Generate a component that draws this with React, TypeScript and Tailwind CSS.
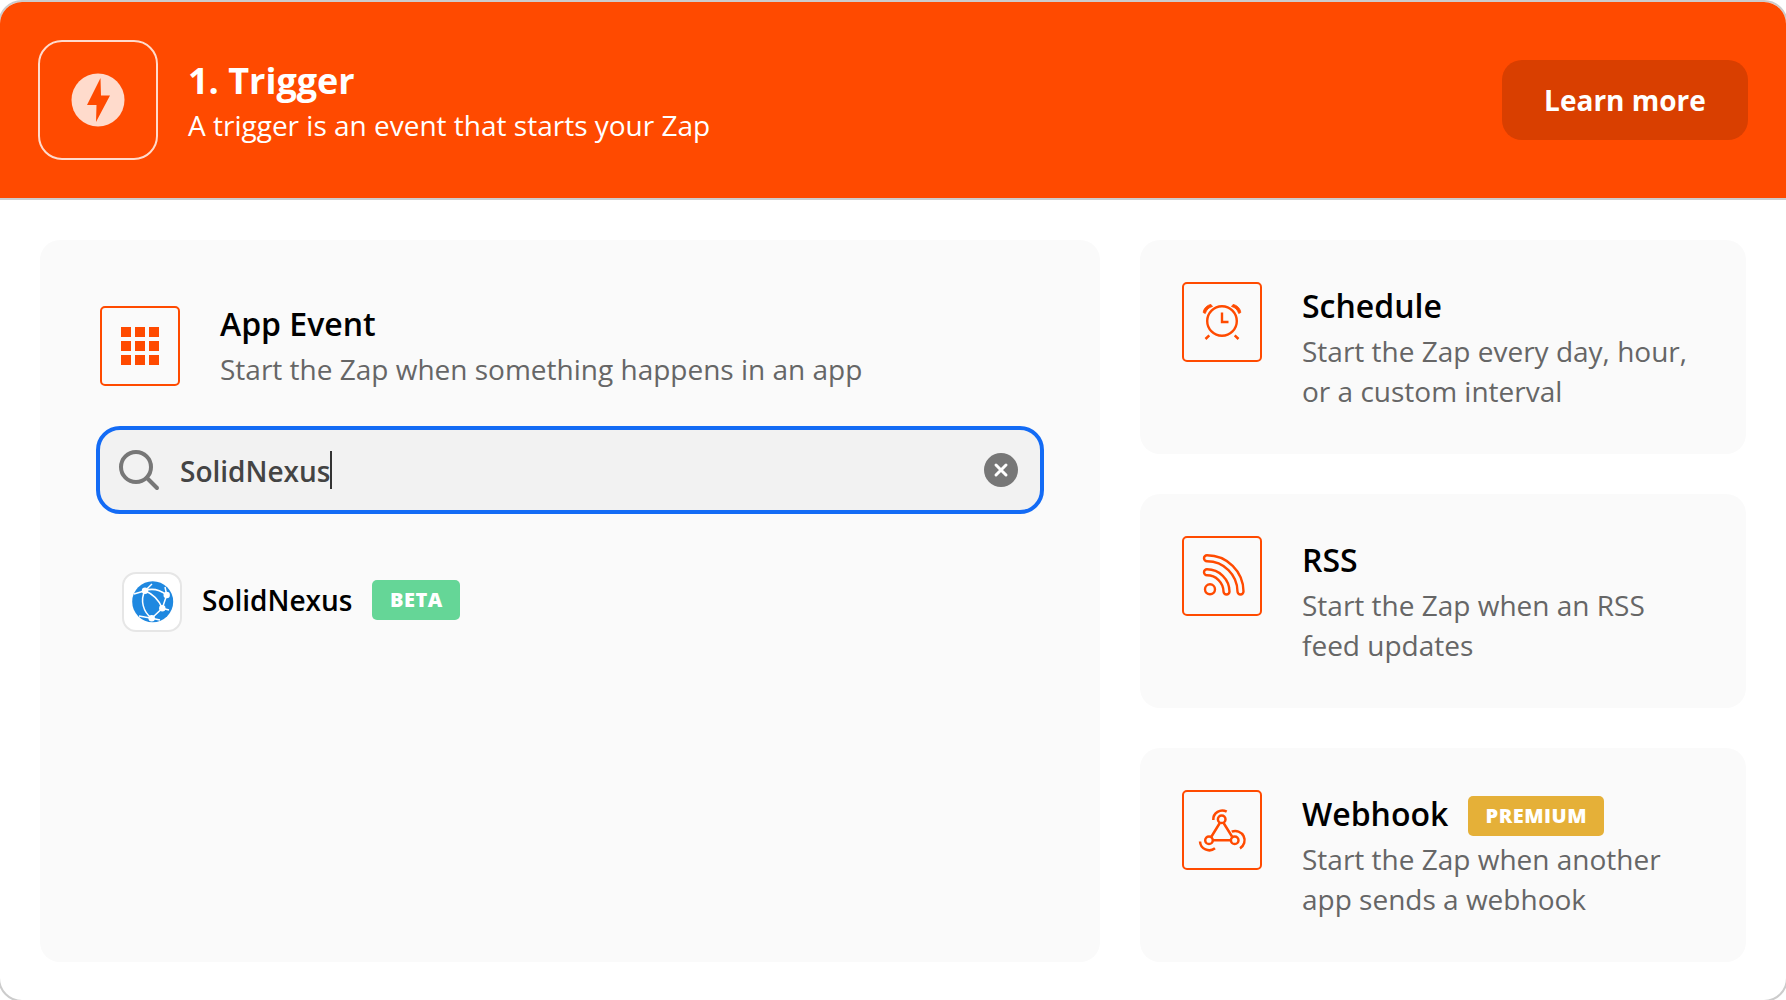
import React from "react";

const Box = ({ children }: { children: React.ReactNode }) => (
  <div className="w-20 h-20 shrink-0 rounded-[5px] border-2 border-[#ff4a00] flex items-center justify-center">
    <svg width="76" height="76" viewBox="2 2 76 76" fill="none" stroke="#ff4a00" strokeWidth="2.400">
      {children}
    </svg>
  </div>
);

const Alarm = () => (
  <Box>
    <circle cx="40" cy="39" r="14.800" />
    <path d="M40 30.500V40H46.500" />
    <path d="M21.200 30.500C21.500 26.500 25 23 29 22.500L30.500 24.500C26.800 25.300 24.500 27.800 23.300 31.500Z" fill="#ff4a00" strokeWidth="0.800" />
    <path d="M58.800 30.500C58.500 26.500 55 23 51 22.500L49.500 24.500C53.200 25.300 55.500 27.800 56.700 31.500Z" fill="#ff4a00" strokeWidth="0.800" />
    <path d="M27.300 53.300L23.500 57M52.700 53.300L56.500 57" strokeWidth="2.500" />
  </Box>
);

const Rss = () => (
  <Box>
    <path d="M25 19.300A36.500 36.500 0 0 1 61.500 55.500A3 3 0 0 1 55.500 55.500A30.500 30.500 0 0 0 25 25.300A3 3 0 0 1 25 19.300Z" />
    <path d="M25 33.300A22.500 22.500 0 0 1 47.500 55.500A3 3 0 0 1 41.500 55.500A16.500 16.500 0 0 0 25 39.300A3 3 0 0 1 25 33.300Z" />
    <circle cx="28" cy="53.300" r="5" />
  </Box>
);

const Hook = () => (
  <Box>
    <circle cx="39.700" cy="29.300" r="3.800" strokeWidth="2.500" />
    <circle cx="27" cy="50.300" r="3.800" strokeWidth="2.500" />
    <circle cx="52.700" cy="50.300" r="3.800" strokeWidth="2.500" />
    <path d="M37.800 33L29.500 46.500M41.600 33L50 46.500M31 50.300H48.800" strokeWidth="2.500" />
    <path d="M44.700 21.700A9 9 0 0 0 31.300 30" strokeWidth="2.500" />
    <path d="M18 51.500A9.300 9.300 0 0 0 33 58.300" strokeWidth="2.500" />
    <path d="M49.700 41.700A9.300 9.300 0 0 1 58 58.300" strokeWidth="2.500" />
  </Box>
);

const Card = ({ icon, title, badge, lines }: { icon: React.ReactNode; title: string; badge?: boolean; lines: string[] }) => (
  <div className="h-[214px] rounded-[20px] bg-[#fafafa] pl-[42px] pt-[42px] flex gap-10">
    {icon}
    <div className="pt-0.5">
      <div className="flex items-center h-[40px] gap-5 mt-[2px]">
        <span className="text-[32px] font-semibold text-black leading-10">{title}</span>
        {badge && (
          <span className="mt-1 h-10 w-[136px] rounded-[5px] bg-[#e5b038] text-white text-[20px] font-extrabold flex items-center justify-center tracking-[0.5px]">
            PREMIUM
          </span>
        )}
      </div>
      <div className="text-[28px] leading-10 text-[#666666] mt-[5px]">
        {lines.map((l) => (
          <div key={l}>{l}</div>
        ))}
      </div>
    </div>
  </div>
);

export default function App() {
  return (
    <div className="h-[1000px] w-[1786px] overflow-hidden bg-white font-['Open_Sans',sans-serif]">
      <div className="-ml-[2px] w-[1790px] h-[1002px] rounded-[24px] border-2 border-[#cccccc] overflow-hidden bg-white">
        <header className="h-[196px] bg-[#ff4a00] border-b-2 border-[#cccccc] box-content flex items-center pl-[38px] pr-[38px] -mb-[2px]">
          <div className="w-[120px] h-[120px] rounded-[24px] border-2 border-[#ffdbcc] flex items-center justify-center">
            <svg width="54" height="54" viewBox="0 0 54 54">
              <circle cx="27" cy="27" r="26.500" fill="#ffdbcc" />
              <path d="M29.500 5L16 32H25.500L25 49L39 22.500H30Z" fill="#ff4a00" />
            </svg>
          </div>
          <div className="ml-[30px] flex-1 text-white pt-[3px]">
            <div className="text-[36px] font-bold leading-[44px]">1. Trigger</div>
            <div className="text-[28px] leading-10 mt-[2px]">A trigger is an event that starts your Zap</div>
          </div>
          <button className="w-[246px] h-20 rounded-[20px] bg-[#d93f00] text-white text-[28px] font-bold">Learn more</button>
        </header>
        <main className="flex gap-10 pl-10 pt-[42px]">
          <section className="w-[1060px] h-[722px] rounded-[20px] bg-[#fafafa] px-[56px] pt-[66px]">
            <div className="flex gap-10 pl-1">
              <div className="w-20 h-20 shrink-0 rounded-[5px] border-2 border-[#ff4a00] flex items-center justify-center">
                <div className="grid grid-cols-3 gap-1">
                  {Array.from({ length: 9 }).map((_, i) => (
                    <div key={i} className="w-2.5 h-2.5 bg-[#ff4a00]" />
                  ))}
                </div>
              </div>
              <div className="-mt-0.5">
                <div className="text-[32px] font-semibold text-black leading-10">App Event</div>
                <div className="text-[28px] leading-10 text-[#666666] mt-[5px]">Start the Zap when something happens in an app</div>
              </div>
            </div>
            <div className="mt-[37px] h-[88px] w-[948px] rounded-[24px] border-4 border-[#136bf5] bg-[#f2f2f2] flex items-center pl-[18px] pr-[22px]">
              <svg width="42" height="42" viewBox="0 0 42 42" fill="none" stroke="#777777" strokeWidth="4" strokeLinecap="round" className="shrink-0">
                <circle cx="18" cy="18" r="15" />
                <path d="M29 29L39 39" />
              </svg>
              <div className="ml-5 flex-1 flex items-center text-[28px] font-semibold text-[#444444]">
                <span className="pt-[2px]">SolidNexus</span><span className="w-[1.5px] h-[38px] bg-[#333333]" />
              </div>
              <div className="w-[34px] h-[34px] rounded-full bg-[#777777] flex items-center justify-center">
                <svg width="16" height="16" viewBox="0 0 16 16" stroke="#ffffff" strokeWidth="3" strokeLinecap="round">
                  <path d="M3 3L13 13M13 3L3 13" />
                </svg>
              </div>
            </div>
            <div className="mt-[58px] ml-[26px] flex items-center">
              <div className="w-[60px] h-[60px] rounded-[14px] border-2 border-[#e6e6e6] bg-white flex items-center justify-center">
                <svg width="56" height="56" viewBox="2 2 56 56">
                  <circle cx="30.700" cy="29.700" r="20.500" fill="#1f88e0" />
                  <path d="M12 22L23 18.700C30 16 38 18 44.700 23L40.300 36.300L29.700 46.300M23 18.700C31 22 37 28 40.300 36.300M23 18.700C18 28 21 40 29.700 46.300M30 12L23 18.700M44.700 23L43 15M40.300 36.300L47 38M29.700 46.300L17 44M29.700 46.300L38 48" stroke="#ffffff" strokeWidth="1.500" fill="none" />
                  <circle cx="23" cy="18.700" r="3.200" fill="#ffffff" />
                  <circle cx="44.700" cy="23" r="3.200" fill="#ffffff" />
                  <circle cx="40.300" cy="36.300" r="3.200" fill="#ffffff" />
                  <circle cx="29.700" cy="46.300" r="3.200" fill="#ffffff" />
                </svg>
              </div>
              <span className="ml-5 mb-[4px] text-[28px] font-semibold text-black">SolidNexus</span>
              <span className="ml-5 mb-[5px] w-[88px] h-10 rounded-[5px] bg-[#65d697] text-white text-[20px] font-extrabold flex items-center justify-center tracking-[0.5px]">BETA</span>
            </div>
          </section>
          <aside className="w-[606px] flex flex-col gap-10">
            <Card icon={<Alarm />} title="Schedule" lines={["Start the Zap every day, hour,", "or a custom interval"]} />
            <Card icon={<Rss />} title="RSS" lines={["Start the Zap when an RSS", "feed updates"]} />
            <Card icon={<Hook />} title="Webhook" badge lines={["Start the Zap when another", "app sends a webhook"]} />
          </aside>
        </main>
      </div>
    </div>
  );
}
